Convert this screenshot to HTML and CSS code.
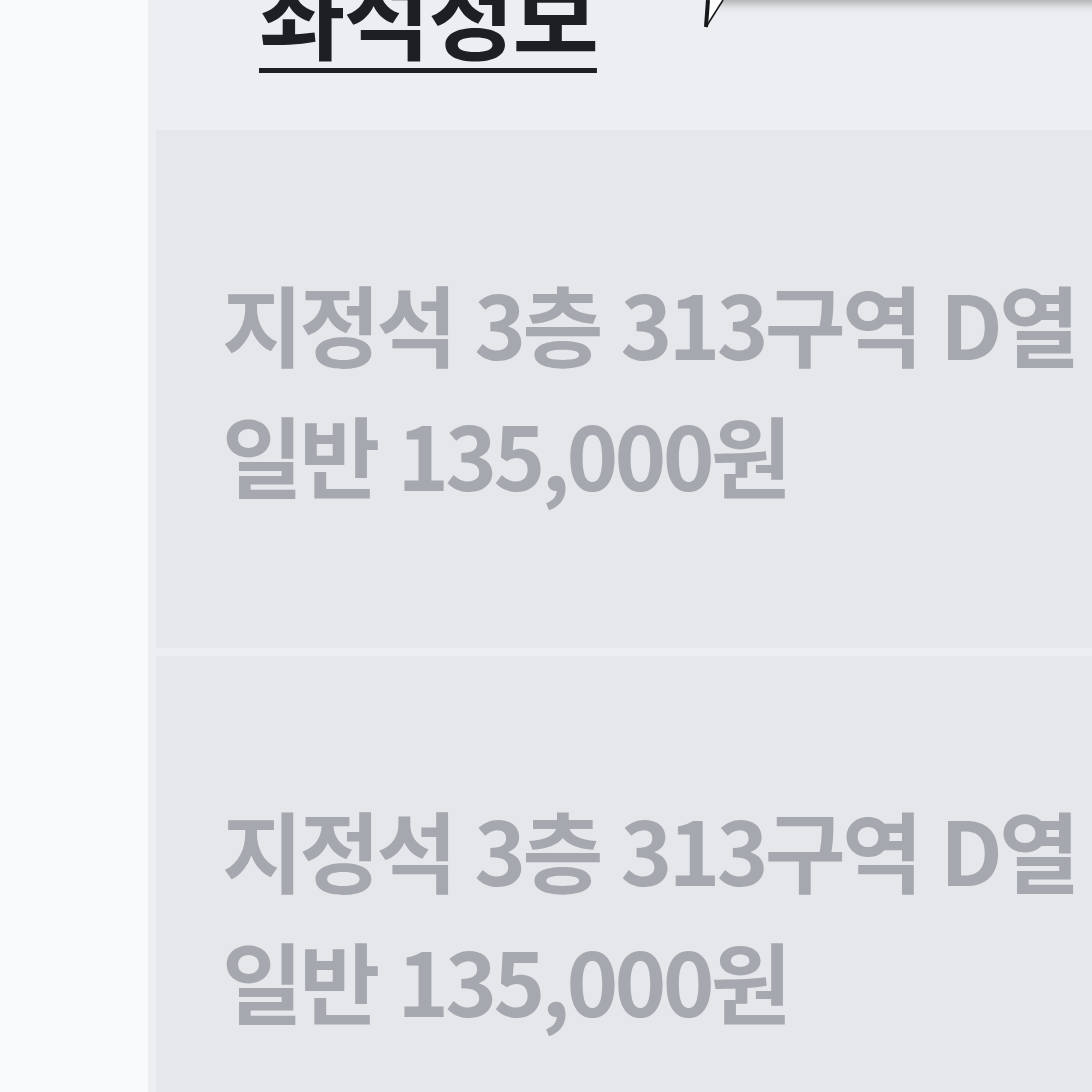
FILE: index.html
```html
<!DOCTYPE html>
<html lang="ko">
<head>
<meta charset="UTF-8">
<meta name="viewport" content="width=device-width, initial-scale=1.0">
<title>좌석정보</title>
<link rel="stylesheet" href="styles.css">
</head>
<body>

<div class="page">
    <div class="side"></div>

    <div class="panel">
        <div class="bubble"></div>
        <svg class="bubble-tail" width="24" height="30" viewBox="0 0 24 30">
            <polygon points="3,27 4,0 20,0" fill="#fff"/>
            <line x1="3" y1="27" x2="5" y2="0" stroke="#17181a" stroke-width="4"/>
            <line x1="3" y1="27" x2="20" y2="0" stroke="#17181a" stroke-width="1.6"/>
        </svg>

        <div class="panel-head">
            <h2 class="title">좌석정보</h2>
        </div>

        <div class="seat-list">
            <div class="seat-card">
                <p class="seat-line">지정석 3층 313구역 D열</p>
                <p class="seat-line">일반 135,000원</p>
            </div>
            <div class="seat-card">
                <p class="seat-line">지정석 3층 313구역 D열</p>
                <p class="seat-line">일반 135,000원</p>
            </div>
        </div>
    </div>
</div>

</body>
</html>
```

FILE: styles.css
```css
body {
    margin: 0;
    background-color: #f8f9fb;
    font-family: "Noto Sans CJK KR", "Noto Sans", sans-serif;
    overflow: hidden;
}
.page {
    display: flex;
    min-height: 1092px;
}
.side {
    width: 148px;
    flex-shrink: 0;
}
.panel {
    flex: 1;
    position: relative;
    background-color: #eceef1;
    padding-left: 8px;
}
.bubble {
    position: absolute;
    top: -80px;
    left: 565px;
    width: 700px;
    height: 80px;
    background-color: #fff;
    box-shadow: 0 3px 10px rgba(0, 0, 0, 0.32);
}
.bubble-tail {
    position: absolute;
    top: 0;
    left: 555px;
}
.panel-head {
    height: 130px;
    padding-left: 103px;
    overflow: hidden;
}
.title {
    display: inline-block;
    margin: -58px 0 0 0;
    font-size: 94px;
    line-height: 140px;
    font-weight: 700;
    letter-spacing: -2px;
    color: #1e1f22;
    text-decoration: underline;
    text-decoration-thickness: 5px;
    text-underline-offset: 15px;
}
.seat-list {
    display: flex;
    flex-direction: column;
    gap: 8px;
}
.seat-card {
    background-color: #e5e7ea;
    height: 518px;
    box-sizing: border-box;
    padding: 126px 0 0 66px;
}
.seat-line {
    margin: 0;
    font-size: 88px;
    line-height: 131px;
    font-weight: 700;
    letter-spacing: -3.8px;
    color: #a5a9af;
    white-space: nowrap;
}
```
